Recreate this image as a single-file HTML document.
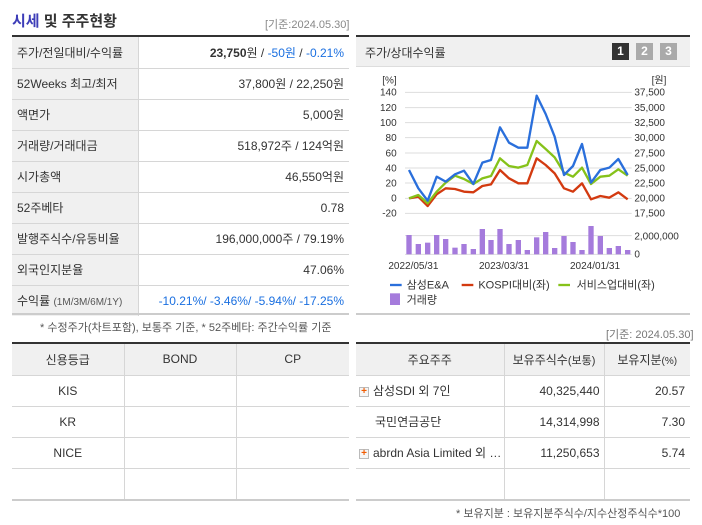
<!DOCTYPE html>
<html><head><meta charset="utf-8"><style>
*{margin:0;padding:0;box-sizing:border-box}
body{width:702px;height:525px;background:#fff;font-family:"Liberation Sans","Noto Sans CJK KR",sans-serif;color:#333;position:relative;overflow:hidden;font-size:12px}
.a{position:absolute}
table{border-collapse:collapse;position:absolute;table-layout:fixed}
td{height:31px;border-bottom:1px solid #d6d6d6;font-size:12px;white-space:nowrap}
.t1 td.l{background:#f0f0f0;border-right:1px solid #d6d6d6;padding-left:5px;color:#333}
.t1 td.v{text-align:right;padding-right:5px;color:#333}
.b,.t1 td.v.b{color:#1a6fe0}
.g td{text-align:center;border-right:1px solid #d6d6d6}
.g td:last-child{border-right:none}
.g tr.h td{background:#f0f0f0}
.plus{display:inline-block;width:10px;height:10px;border:1px solid #bbb;background:#f6f6f6;color:#f05a00;font-size:10px;line-height:8px;text-align:center;font-weight:bold;vertical-align:middle;margin-right:4px}
</style></head><body>
<div class="a" style="left:12px;top:10px;font-size:15px;font-weight:bold"><span style="color:#3d3db8">시세</span> 및 주주현황</div>
<div class="a" style="left:265px;top:16px;font-size:11px;color:#888">[기준:2024.05.30]</div>
<div class="a" style="left:12px;top:35px;width:337px;height:2px;background:#333"></div>
<table class="t1" style="left:12px;top:37px;width:337px">
<col style="width:126px"><col>
<tr><td class="l">주가/전일대비/수익률</td><td class="v"><b>23,750</b>원 / <span class="b">-50원</span> / <span class="b">-0.21%</span></td></tr>
<tr><td class="l">52Weeks 최고/최저</td><td class="v">37,800원 / 22,250원</td></tr>
<tr><td class="l">액면가</td><td class="v">5,000원</td></tr>
<tr><td class="l">거래량/거래대금</td><td class="v">518,972주 / 124억원</td></tr>
<tr><td class="l">시가총액</td><td class="v">46,550억원</td></tr>
<tr><td class="l">52주베타</td><td class="v">0.78</td></tr>
<tr><td class="l">발행주식수/유동비율</td><td class="v">196,000,000주 / 79.19%</td></tr>
<tr><td class="l">외국인지분율</td><td class="v">47.06%</td></tr>
<tr><td class="l" style="border-bottom:none">수익률 <span style="font-size:10px;color:#555">(1M/3M/6M/1Y)</span></td><td class="v b" style="border-bottom:none">-10.21%/ -3.46%/ -5.94%/ -17.25%</td></tr>
</table>
<div class="a" style="left:12px;top:313px;width:337px;height:2px;background:#ccc"></div>
<div class="a" style="left:40px;top:319px;font-size:11px;color:#555">* 수정주가(차트포함), 보통주 기준, * 52주베타: 주간수익률 기준</div>

<div class="a" style="left:356px;top:35px;width:334px;height:2px;background:#333"></div>
<div class="a" style="left:356px;top:37px;width:334px;height:30px;background:#f0f0f0;border-bottom:1px solid #ddd"></div>
<div class="a" style="left:365px;top:44px;font-size:12px">주가/상대수익률</div>
<div class="a" style="left:612px;top:43px;width:17px;height:17px;background:#333;color:#fff;font-weight:bold;text-align:center;line-height:17px;font-size:12px">1</div>
<div class="a" style="left:636px;top:43px;width:17px;height:17px;background:#aaa;color:#fff;font-weight:bold;text-align:center;line-height:17px;font-size:12px">2</div>
<div class="a" style="left:660px;top:43px;width:17px;height:17px;background:#aaa;color:#fff;font-weight:bold;text-align:center;line-height:17px;font-size:12px">3</div>

<svg class="a" style="left:355px;top:30px" width="347" height="280" viewBox="0 0 1041 840" font-family="Liberation Sans, Noto Sans CJK KR, sans-serif">
<g stroke="#ddd" stroke-width="3">
<line x1="150" y1="187" x2="830" y2="187"/><line x1="150" y1="233" x2="830" y2="233"/><line x1="150" y1="278" x2="830" y2="278"/><line x1="150" y1="323" x2="830" y2="323"/><line x1="150" y1="369" x2="830" y2="369"/><line x1="150" y1="414" x2="830" y2="414"/><line x1="150" y1="459" x2="830" y2="459"/><line x1="150" y1="505" x2="830" y2="505"/><line x1="150" y1="550" x2="830" y2="550"/>
<line x1="150" y1="617" x2="830" y2="617"/><line x1="150" y1="673" x2="830" y2="673"/>
</g>
<g font-size="30" fill="#333" text-anchor="end">
<text x="125" y="160">[%]</text>
<text x="125" y="197">140</text><text x="125" y="243">120</text><text x="125" y="288">100</text><text x="125" y="333">80</text><text x="125" y="379">60</text><text x="125" y="424">40</text><text x="125" y="469">20</text><text x="125" y="515">0</text><text x="125" y="560">-20</text>
</g>
<g font-size="30" fill="#333">
<text x="890" y="160">[원]</text>
<text x="838" y="197">37,500</text><text x="838" y="243">35,000</text><text x="838" y="288">32,500</text><text x="838" y="333">30,000</text><text x="838" y="379">27,500</text><text x="838" y="424">25,000</text><text x="838" y="469">22,500</text><text x="838" y="515">20,000</text><text x="838" y="560">17,500</text>
<text x="838" y="628">2,000,000</text><text x="838" y="683">0</text>
<text x="100" y="717">2022/05/31</text><text x="372" y="717">2023/03/31</text><text x="645" y="717">2024/01/31</text>
</g>
<g fill="#a57bdc">
<rect x="154" y="615" width="16" height="58"/><rect x="182" y="642" width="16" height="31"/><rect x="210" y="638" width="16" height="35"/><rect x="237" y="615" width="16" height="58"/><rect x="264" y="627" width="16" height="46"/><rect x="292" y="653" width="16" height="20"/><rect x="319" y="642" width="16" height="31"/><rect x="347" y="657" width="16" height="16"/><rect x="374" y="597" width="16" height="76"/><rect x="400" y="630" width="16" height="43"/><rect x="427" y="597" width="16" height="76"/><rect x="454" y="642" width="16" height="31"/><rect x="482" y="630" width="16" height="43"/><rect x="509" y="660" width="16" height="13"/><rect x="537" y="622" width="16" height="51"/><rect x="564" y="606" width="16" height="67"/><rect x="591" y="654" width="16" height="19"/><rect x="619" y="618" width="16" height="55"/><rect x="646" y="636" width="16" height="37"/><rect x="673" y="660" width="16" height="13"/><rect x="700" y="588" width="16" height="85"/><rect x="728" y="618" width="16" height="55"/><rect x="755" y="654" width="16" height="19"/><rect x="782" y="648" width="16" height="25"/><rect x="810" y="660" width="16" height="13"/>
</g>
<g fill="none" stroke-width="7" stroke-linejoin="round">
<polyline stroke="#d33a10" points="162,505 190,500 218,528 245,493 272,475 300,477 327,485 355,487 382,468 408,463 435,420 462,445 490,460 517,460 545,385 572,405 599,430 627,475 654,485 681,460 708,508 736,498 763,503 790,487 818,508"/>
<polyline stroke="#86c21a" points="162,505 190,495 218,520 245,485 272,458 300,437 327,447 355,462 382,445 408,438 435,385 462,408 490,413 517,405 545,333 572,357 599,382 627,428 654,440 681,413 708,462 736,440 763,437 790,418 818,437"/>
<polyline stroke="#2a6fdb" points="162,420 190,475 218,512 245,440 272,455 300,433 327,422 355,462 382,398 408,390 435,292 462,338 490,353 517,353 545,197 572,252 599,320 627,435 654,408 681,342 708,458 736,420 763,413 790,387 818,435"/>
</g>
<g font-size="33" fill="#333">
<line x1="105" y1="765" x2="140" y2="765" stroke="#2a6fdb" stroke-width="7"/><text x="155" y="775">삼성E&amp;A</text>
<line x1="320" y1="765" x2="355" y2="765" stroke="#d33a10" stroke-width="7"/><text x="370" y="775">KOSPI대비(좌)</text>
<line x1="610" y1="765" x2="645" y2="765" stroke="#86c21a" stroke-width="7"/><text x="665" y="775">서비스업대비(좌)</text>
<rect x="105" y="790" width="30" height="35" fill="#a57bdc"/><text x="155" y="820">거래량</text>
</g>
</svg>
<div class="a" style="left:356px;top:313px;width:334px;height:2px;background:#ccc"></div>
<div class="a" style="left:606px;top:326px;font-size:11px;color:#777">[기준: 2024.05.30]</div>

<div class="a" style="left:12px;top:342px;width:337px;height:2px;background:#333"></div>
<table class="g" style="left:12px;top:344px;width:337px">
<col style="width:112px"><col style="width:112px"><col>
<tr class="h"><td>신용등급</td><td>BOND</td><td>CP</td></tr>
<tr><td>KIS</td><td></td><td></td></tr>
<tr><td>KR</td><td></td><td></td></tr>
<tr><td>NICE</td><td></td><td></td></tr>
<tr><td style="border-bottom:none"></td><td style="border-bottom:none"></td><td style="border-bottom:none"></td></tr>
</table>
<div class="a" style="left:12px;top:499px;width:337px;height:2px;background:#ccc"></div>

<div class="a" style="left:356px;top:342px;width:334px;height:2px;background:#333"></div>
<table class="g" style="left:356px;top:344px;width:334px">
<col style="width:148px"><col style="width:100px"><col>
<tr class="h"><td>주요주주</td><td>보유주식수<span style="font-size:11px">(보통)</span></td><td>보유지분<span style="font-size:10px">(%)</span></td></tr>
<tr><td style="text-align:left;padding-left:3px"><span class="plus">+</span>삼성SDI 외 7인</td><td style="text-align:right;padding-right:4px">40,325,440</td><td style="text-align:right;padding-right:5px">20.57</td></tr>
<tr><td style="text-align:left;padding-left:19px">국민연금공단</td><td style="text-align:right;padding-right:4px">14,314,998</td><td style="text-align:right;padding-right:5px">7.30</td></tr>
<tr><td style="text-align:left;padding-left:3px"><span class="plus">+</span>abrdn Asia Limited 외 …</td><td style="text-align:right;padding-right:4px">11,250,653</td><td style="text-align:right;padding-right:5px">5.74</td></tr>
<tr><td style="border-bottom:none"></td><td style="border-bottom:none"></td><td style="border-bottom:none"></td></tr>
</table>
<div class="a" style="left:356px;top:499px;width:334px;height:2px;background:#ccc"></div>
<div class="a" style="left:456px;top:505px;font-size:11px;color:#555">* 보유지분 : 보유지분주식수/지수산정주식수*100</div>
</body></html>
